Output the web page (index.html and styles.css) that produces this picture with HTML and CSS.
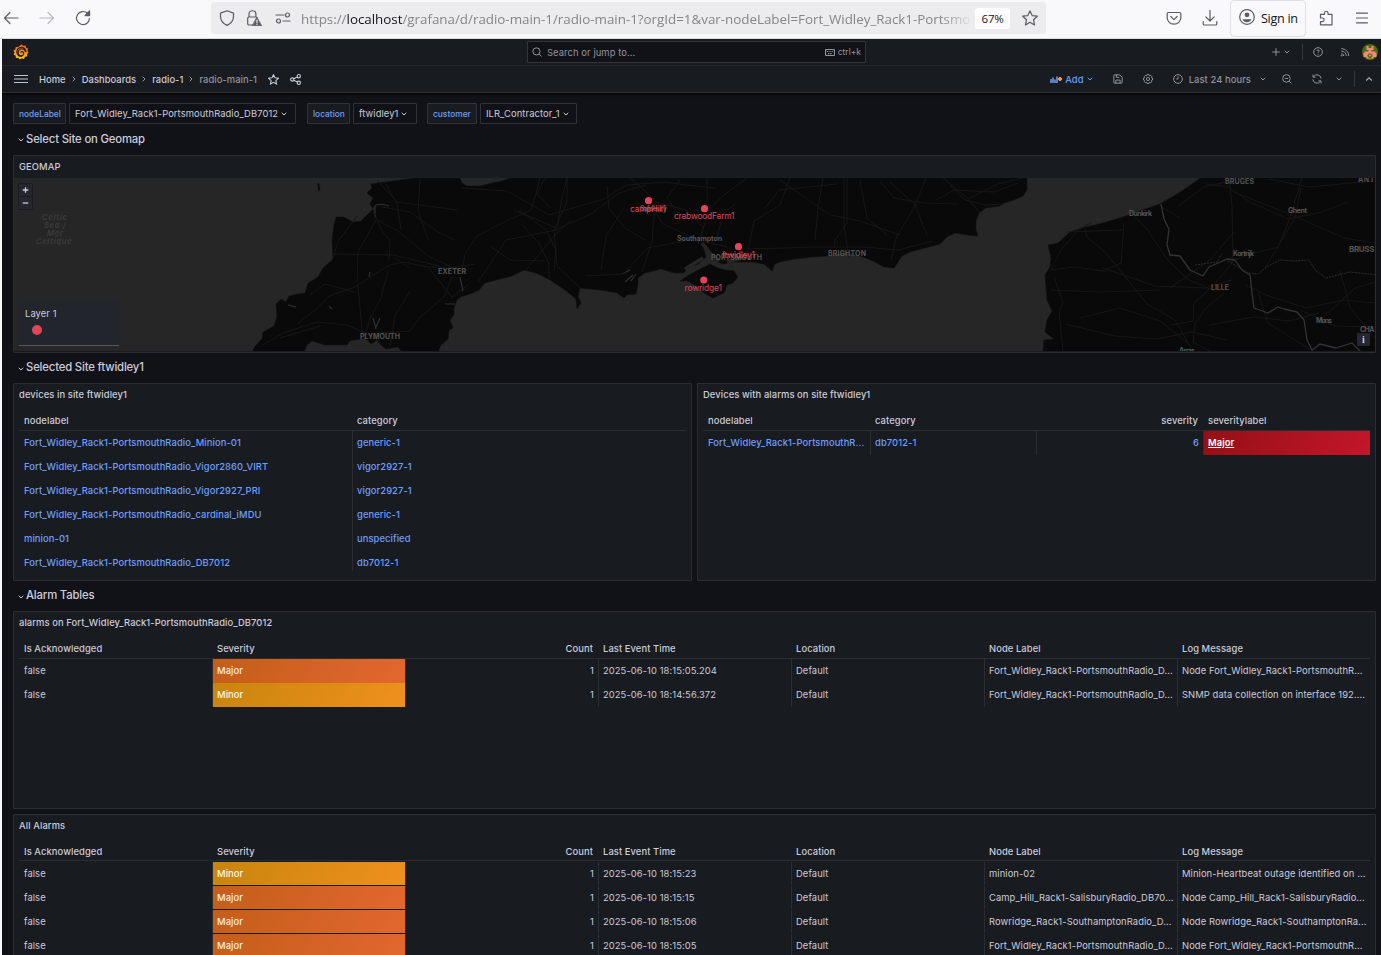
FILE: index.html
```html
<!DOCTYPE html>
<html lang="en">
<head>
<meta charset="utf-8">
<title>radio-main-1 - Dashboards - Grafana</title>
<link rel="stylesheet" href="styles.css">
</head>
<body>
<svg class="defs" width="0" height="0" aria-hidden="true">
  <symbol id="down" viewBox="0 0 8 8"><path d="M2 3l2 2 2-2" fill="none" stroke="currentColor" stroke-width="1" stroke-linecap="round" stroke-linejoin="round"/></symbol>
  <symbol id="right" viewBox="0 0 8 8"><path d="M3 2l2 2-2 2" fill="none" stroke="currentColor" stroke-width="1" stroke-linecap="round" stroke-linejoin="round"/></symbol>
  <linearGradient id="flame" x1="0" y1="0" x2="0" y2="1"><stop offset="0" stop-color="#f05a28"/><stop offset="1" stop-color="#fbca0a"/></linearGradient>
</svg>

<header class="browser">
  <nav class="browser-nav">
    <svg class="i16" viewBox="0 0 16 16"><path d="M15 8H1.500M7 2.500L1.500 8 7 13.500"/></svg>
    <svg class="i16 faded" viewBox="0 0 16 16"><path d="M1 8h13.500M9 2.500L14.500 8 9 13.500"/></svg>
    <svg class="i16" viewBox="0 0 16 16"><path d="M14.500 8.500a6.500 6.500 0 1 1-2-5.200l1.700 1.700"/><path d="M14.600 1v4.600H10z" fill="#5b5b66"/></svg>
  </nav>
  <div class="urlbar">
    <svg class="i16 shield" viewBox="0 0 16 16"><path d="M8 .8l6.500 2.300v3.400c0 4-2.400 7-6.500 8.900C3.900 13.500 1.500 10.500 1.500 6.500V3.100z"/></svg>
    <svg class="i16 lock" viewBox="0 0 16 16"><path d="M6.500 15H3a1.300 1.300 0 0 1-1.300-1.300V8.300A1.300 1.300 0 0 1 3 7h7a1.300 1.300 0 0 1 1.300 1.300M3 7V4.200a3.400 3.400 0 0 1 6.900 0V7"/><path d="M11 7.500l4.600 8.200H6.500z" fill="#5b5b66" stroke="#5b5b66" stroke-width=".8"/><path class="bang" d="M11 10v2.600M11 14v.4"/></svg>
    <svg class="i16 perms" viewBox="0 0 16 16"><path d="M1 5h8M8 11h7"/><circle cx="12.500" cy="5" r="2"/><circle cx="3.500" cy="11" r="2"/></svg>
    <div class="url">https://<b>localhost</b>/grafana/d/radio-main-1/radio-main-1?orgId=1&amp;var-nodeLabel=Fort_Widley_Rack1-Portsmo</div>
    <span class="zoom">67%</span>
    <svg class="i16 bookmark" viewBox="0 0 16 16"><path d="M8 .9l2.200 4.700 5.100.6-3.800 3.500 1 5.200L8 12.300l-4.500 2.600 1-5.200L.7 6.200l5.100-.6z"/></svg>
  </div>
  <div class="browser-tools">
    <svg class="i16 pocket" viewBox="0 0 16 16"><path d="M2.500 2.500h11A1.300 1.300 0 0 1 14.800 3.800v4A6.800 6.400 0 0 1 1.200 7.800v-4A1.300 1.300 0 0 1 2.500 2.500zM4.800 6.500L8 9.600l3.200-3.100"/></svg>
    <svg class="i16 download" viewBox="0 0 16 16"><path d="M8 .5v10M3.800 6.800L8 11l4.200-4.200M1.200 11.500v2.200a1.300 1.300 0 0 0 1.300 1.300h11a1.300 1.300 0 0 0 1.300-1.300v-2.200"/></svg>
    <div class="signin">
      <svg class="i16" viewBox="0 0 16 16"><circle cx="8" cy="8" r="7.300"/><circle cx="8" cy="5.800" r="2.400" fill="#5b5b66" stroke="none"/><path d="M3.500 10.200h9c-.8 2-2.600 3-4.500 3s-3.700-1-4.500-3z" fill="#5b5b66" stroke="none"/></svg>
      <span>Sign in</span>
    </div>
    <svg class="i16 ext" viewBox="0 0 16 16"><path d="M2.500 14.800V11.600h1.800a1.800 1.800 0 0 0 0-3.600H2.500V4.300h4V3a1.700 1.700 0 0 1 3.500 0v1.300h4v10.500z"/></svg>
    <svg class="i16 burger" viewBox="0 0 16 16"><path d="M2.500 3.200h11M2.500 8h11M2.500 12.800h11"/></svg>
  </div>
</header>

<main class="app">
  <div class="topbar">
    <svg class="logo" viewBox="0 0 16 16"><path d="M8.500.3l1.500 1.500 2.500-.3.500 2.100 2 1.200-.5 2 1 1.800-1.400 1.500.2 2.200-2.300.5-1 2.100-2.200-.6-1.900 1.200L5.400 14l-2.500.1-.3-2.400-2-1.300.9-2L.4 6.500l2-1.200.3-2.400 2.500.1z" fill="url(#flame)"/><path d="M13 8.300A4.600 4.600 0 1 0 9.200 12.400M12.400 8A3.600 3.600 0 1 0 8 11.800c1.900 0 3-1.400 2.700-2.800-.4-1.700-2.800-1.900-3-.2" fill="none" stroke="#181b1f" stroke-width="1.100"/></svg>
    <div class="search">
      <svg class="i10" viewBox="0 0 12 12"><circle cx="5.300" cy="5.300" r="4.300"/><path d="M8.500 8.500l2.800 2.800"/></svg>
      <span class="search-text">Search or jump to...</span>
      <svg class="kbd" viewBox="0 0 10 7"><rect x=".5" y=".5" width="9" height="6" rx="1"/><path d="M2 2.500h6M3 4.600h4" stroke-dasharray="1 .7"/></svg>
      <span class="ctrlk">ctrl+k</span>
    </div>
    <div class="top-actions">
      <svg class="i10" viewBox="0 0 12 12"><path d="M6 1.500v9M1.500 6h9"/></svg>
      <svg class="chev c-plus"><use href="#down"/></svg>
      <i class="vline"></i>
      <svg class="i10 help" viewBox="0 0 12 12"><circle cx="6" cy="6" r="5.200"/><path d="M4.600 4.800a1.400 1.400 0 1 1 1.900 1.300c-.4.200-.5.400-.5.900M6 8.300v.9"/></svg>
      <svg class="i10 rss" viewBox="0 0 12 12"><path d="M1.500 2a8.600 8.600 0 0 1 9 8.800M1.500 5a5.700 5.700 0 0 1 6 5.800M1.500 8a3 3 0 0 1 3 2.800"/><circle cx="2" cy="10.300" r=".6"/></svg>
      <svg class="avatar" viewBox="0 0 16 16"><circle cx="8" cy="8" r="8" fill="#4d6b10"/><path d="M4.500 2h2v2h3V2h2v4h-2v1.500h4V9h1v4h-3v1.500h-7V13h-3V9h1V7.500h4V6h-2zM6.500 9.500v1.200H5.500v2h1V14h3v-1.300h1v-2h-1V9.500z" fill="#f58a78" fill-rule="evenodd"/><path d="M7 10.800h2v1.500H7z" fill="#f58a78"/></svg>
    </div>
  </div>

  <div class="toolbar">
    <svg class="menu" viewBox="0 0 14 10"><path d="M0 1.500h14M0 5h14M0 8.500h14"/></svg>
    <nav class="crumbs">
      <span class="cr">Home</span><svg class="chev"><use href="#right"/></svg>
      <span class="cr">Dashboards</span><svg class="chev"><use href="#right"/></svg>
      <span class="cr">radio-1</span><svg class="chev"><use href="#right"/></svg>
      <span class="cr current">radio-main-1</span>
    </nav>
    <svg class="i10 star" viewBox="0 0 12 12"><path d="M6 .8l1.600 3.400 3.700.5-2.700 2.500.7 3.700L6 9.100l-3.300 1.800.7-3.700L.7 4.700l3.700-.5z"/></svg>
    <svg class="i10 share" viewBox="0 0 12 12"><circle cx="2.400" cy="6" r="1.800"/><circle cx="9.600" cy="2.400" r="1.800"/><circle cx="9.600" cy="9.600" r="1.800"/><path d="M4 5.200l4-2M4 6.800l4 2"/></svg>
    <div class="tool-actions">
      <svg class="addicon" viewBox="0 0 12 8"><path d="M1 4v4M3 2.500V8M5 4.500V8M7 1.500V8" stroke="#6e9fff" stroke-width="1.500"/><path d="M10 2v4M8 4h4" stroke="#ff9830" stroke-width="1.900"/></svg>
      <span class="add">Add</span>
      <svg class="chev blue"><use href="#down"/></svg>
      <svg class="i10 save" viewBox="0 0 12 12"><path d="M1 2a1 1 0 0 1 1-1h6l3 3v6a1 1 0 0 1-1 1H2a1 1 0 0 1-1-1zM4 1v3h3.500M3.500 11V7.300h5V11"/></svg>
      <svg class="i10 gear" viewBox="0 0 12 12"><path d="M4.700 .8h2.600l.5 1.200 1.600-.3 1.200 1.200-.4 1.500 1.200.4v2.400l-1.200.5.400 1.500-1.300 1.200-1.500-.4-.5 1.200H4.700l-.5-1.200-1.500.4-1.200-1.200.3-1.500L.7 7.200V4.800l1.200-.4-.3-1.500 1.200-1.200 1.500.3z"/><circle cx="6" cy="6" r="1.900"/></svg>
      <svg class="i10 clock" viewBox="0 0 12 12"><circle cx="6" cy="6" r="5.200"/><path d="M6 3v3H4"/></svg>
      <span class="range">Last 24 hours</span>
      <svg class="chev c-range"><use href="#down"/></svg>
      <svg class="i10 zoomout" viewBox="0 0 12 12"><circle cx="5.300" cy="5.300" r="4.500"/><path d="M8.500 8.500l2.800 2.800M3.300 5.300h4"/></svg>
      <svg class="i10 sync" viewBox="0 0 12 12"><path d="M11 5.500A5 5 0 0 0 2 3M1.200 .8v3H4.200M1 6.500A5 5 0 0 0 10 9M10.800 11.200v-3H7.800"/></svg>
      <svg class="chev c-sync"><use href="#down"/></svg>
      <i class="vline v2"></i>
      <svg class="chev collapse" viewBox="0 0 8 8"><path d="M1.200 5.500L4 2.800l2.800 2.700" fill="none" stroke="#a9aab6" stroke-width="1.200"/></svg>
    </div>
  </div>

  <div class="dashboard">
    <div class="vars">
      <span class="var-label nl">nodeLabel</span><span class="var-value nv"><span>Fort_Widley_Rack1-PortsmouthRadio_DB7012</span><svg class="chev"><use href="#down"/></svg></span>
      <span class="var-label ll">location</span><span class="var-value lv"><span>ftwidley1</span><svg class="chev"><use href="#down"/></svg></span>
      <span class="var-label cl">customer</span><span class="var-value cv"><span>ILR_Contractor_1</span><svg class="chev"><use href="#down"/></svg></span>
    </div>

    <h2 class="row-title"><svg class="chev"><use href="#down"/></svg><span>Select Site on Geomap</span></h2>

    <section class="panel geomap">
      <h3><span>GEOMAP</span></h3>
      <div class="map">
        <svg class="map-art" viewBox="14 178 1361 173">
          <g class="land">
            <path d="M252 352L256 345 262 339 263 332 274 326 277 317 276 304 281 299 286 302 289 296 298 294 305 293 308 283 318 277 323 268 333 259 332 240 334 225 336 217 344 217 353 222 361 221 368 214 373 209 370 204 373 198 367 193 372 188 371 184 385 182 400 180 415 178 460 178 462 183 467 186 480 186 492 183 502 181 514 177H1027V190L1023 196 1014 200 1004 203 1000 206 986 208 979 213 976 221 976 230 978 236 967 235 955 233 947 237 940 244 925 248 910 252 902 256 894 268 884 267 873 261 860 256 845 252 827 256 812 257 795 259 780 262 775 264 772 271 764 264 752 262 735 262 722 264 714 259 703 247 706 257 698 264 688 267 684 273 674 273 661 269 645 273 638 278 638 285 636 294 627 295 624 298 617 293 600 290 580 288 578 296 581 303 577 309 576 299 565 290 550 280 536 273 524 270 512 276 500 279 485 283 479 290 470 294 461 297 457 300 454 308 454 315 450 320 453 328 449 330 448 339 441 345 438 352H402L398 347 386 349 382 346 377 340 371 344 365 338 350 341 347 345 325 345 312 341 307 345 304 352z"/>
            <path d="M680 281L689 275 702 268 710 264 718 268 726 270 734 271 738 277 733 283 727 285 724 293 713 298 704 293 696 286 688 281z"/>
            <path d="M1202 177L1182 191 1160 204 1145 209 1120 218 1095 225 1085 227 1070 232 1058 243 1048 245 1051 258 1050 267 1045 275 1047 300 1052 311 1047 320 1045 332 1054 339 1044 340 1043 352H1376V177z"/>
            <path d="M318 183l1 1 1 5-1 2-1-3z"/>
          </g>
          <g class="inlet">
            <path d="M373 210l3-5 6-1 7 2M375 206v12M288 305l8 2M373 318l3 11M376 327l4-9M329 306l3 3M370 272l-1 5M460 277l3 14M445 304h10M622 274l8-4M625 282l8-7M631 281l5-7"/>
            <path class="wide" d="M702 243l8 10 9 8M703 258l-18 11M727 262l18-5"/>
          </g>
          <g class="roads">
            <path d="M263 345l20-12 34-11 30 3 30 14M297 324l18-14 14-14 26-9 23-15 12-7 13-3 25 5 27 0 20-3M373 211l8 18 9 12-1 20M382 207l28 5 28 20 17 8M358 285l4 45 13 10M388 271l-8 30-10 17-6 21M331 262l8-22 18-24M334 254l60 1 45 11M357 282l1-30 18-32M410 268l-15-10M428 267l24 30 16-12M452 277l-8 20-24 20-10 14-18 1-16 1M377 220l21 11 30 25 34 16M390 346l5-30 15-25M280 338l40-12M310 295l15-11 15 4 14 4M377 180l20 22 60 8M385 182l12 22 4 25M420 180l-2 30 10 30"/>
            <path d="M461 274l4-20 12-18 29-15 25-11 6-20 3-14M519 210l27 20 10 20-2 21M514 210l43 18 5-30 5-20M567 178v24l-13 28 3 36 23 22M462 188l45 3 42 24 55-16 22-14 40-3 20 3 30 3M630 178l12 10 14 14 30 8 18 18M655 205l-3 37-10 30M555 230l36-16 28-21 27-8M585 276l38-2 25-26 42-8M521 224l18 19 10 21 0 14M607 186l2 22 16 20 20 12M698 244l9-27 0-39M706 213l18-18 23-17M650 204l13 20 22 10 15 7 27 6M717 238l6-24 12-10M748 252l6-31 26-16 10-27M750 249l65-2 48 0 35 3 34-9M847 178v45l-12 17-1 8M844 178v47l5 33M823 178l-5 30-3 32M765 208l14-18 58-6M780 180l50 35 30 6 40 14M860 180l7 38 20 17M926 178l-12 30-18 30-5 22M890 182l25 23 12 30"/>
            <path d="M943 178l25 21 14 16M968 199l30-15 24-6M936 200l18-10 40 2 24-9M950 185l15 15 20 5 19-1M880 181l14 17 30 5 35 1M478 282l28-42 50-10M525 271l30-36 16-15M490 246l20 14 35 1M601 270l5-34 18-28M545 178l-8 16 14 14M680 180l-13 18 15 20"/>
            <path d="M1051 270l10-20 17-20 14-8M1066 232l56-2M1085 229l2 8 18 15 18 22 24 30 28 16 15 26 4 5M1050 270l25-3 28 4 18-8 3-40M1054 277l9 26-4 8 4 40M1135 217l12 12 20 30 20 20 28 12M1160 206l20 12M1178 206l26-19 22-5M1206 184l22 3 22 15 38 17 34-7 26-10M1229 178l3 28 1 55 14-6 31-8 12-29 12-40M1234 192l60 24 50 22 31 5M1236 258l-22 27-20 18-1 18-22 4M1224 293l-18 15-11 16-2 18 17 9M1246 285l20 10 40 13 38-8 31 3M1209 325l45-8 35 4 30-8M1232 280l-27 8-50-2-52-18M1050 290l50 2 60-2M1065 324l50 12 42 3 35-7 35 8M1080 318l40-10 40 13 30 24M1170 288l40-28 24-28M1301 188l-6 30-12 20-18 30M1269 179l40 8 66-6M1258 293l10 30 25 16 20 12M1320 320l35-32 20-6M1340 270l10 38 25 30M1300 310l35 16 40 1"/>
          </g>
          <g class="border">
            <path d="M1161 204l3 15 5 10-2 16 3 10 10 1 10 14 13 6 6-9 18-8 8 1 7 10 8 5 2 18 2 15 14 5 10-6 6 2 13 3 7 8 3 20 5 10 8-6 16 4 16-5 12 12"/>
            <path class="dots" d="M1195 265l22-3 5-8M1228 261l20 12 10 1 10-8 12-6 14 1 15-1 7 11 10 7 24-6 30 3"/>
          </g>
          <g class="places">
            <g class="sea"><text x="42" y="220">Celtic</text><text x="44" y="228">Sea /</text><text x="47" y="236">Mer</text><text x="36" y="244">Celtique</text></g>
            <text x="438" y="273.500" textLength="28">EXETER</text><text x="360" y="339" textLength="40">PLYMOUTH</text>
            <text x="677" y="241" textLength="45">Southampton</text><text x="711" y="260" textLength="51">PORTSMOUTH</text>
            <text x="828" y="256" textLength="38">BRIGHTON</text><text x="640" y="211" textLength="27">Salisbury</text>
            <text x="1129" y="216" textLength="23">Dunkirk</text><text x="1225" y="184" textLength="29">BRUGES</text>
            <text x="1288" y="213" textLength="19">Ghent</text><text x="1233" y="256" textLength="21">Kortrijk</text>
            <text x="1211" y="290" textLength="18">LILLE</text><text x="1349" y="252" textLength="25.500" class="big">BRUSS</text>
            <text x="1316" y="323" textLength="16">Mons</text><text x="1360" y="332" textLength="14.500">CHA</text>
            <text x="1179" y="353" textLength="16">Arras</text><text x="1358" y="182" textLength="16.500">ANT</text>
          </g>
          <g class="markers">
            <circle cx="648.500" cy="200.700" r="3.600"/><text x="630" y="211.600" textLength="36">campHill1</text>
            <circle cx="704.500" cy="208.700" r="3.600"/><text x="674" y="219" textLength="60.500">crabwoodFarm1</text>
            <circle cx="738.500" cy="246.700" r="3.600"/><text x="722" y="257.600" textLength="33">ftwidley1</text>
            <circle cx="703.800" cy="280" r="3.600"/><text x="684.500" y="290.500" textLength="37.500">rowridge1</text>
          </g>
        </svg>
        <div class="map-zoom"><svg viewBox="0 0 13 13"><path d="M3.500 6.500h6M6.500 3.500v6"/></svg><svg viewBox="0 0 13 13"><path d="M3.500 6.500h6"/></svg></div>
        <div class="legend"><span>Layer 1</span><i></i></div>
        <div class="attrib">i</div>
      </div>
    </section>

    <h2 class="row-title second"><svg class="chev"><use href="#down"/></svg><span>Selected Site ftwidley1</span></h2>

    <div class="split">
      <section class="panel">
        <h3><span>devices in site ftwidley1</span></h3>
        <div class="table two">
          <div class="tr th"><span>nodelabel</span><span>category</span></div>
          <div class="tr link"><span>Fort_Widley_Rack1-PortsmouthRadio_Minion-01</span><span>generic-1</span></div>
          <div class="tr link"><span>Fort_Widley_Rack1-PortsmouthRadio_Vigor2860_VIRT</span><span>vigor2927-1</span></div>
          <div class="tr link"><span>Fort_Widley_Rack1-PortsmouthRadio_Vigor2927_PRI</span><span>vigor2927-1</span></div>
          <div class="tr link"><span>Fort_Widley_Rack1-PortsmouthRadio_cardinal_iMDU</span><span>generic-1</span></div>
          <div class="tr link"><span>minion-01</span><span>unspecified</span></div>
          <div class="tr link"><span>Fort_Widley_Rack1-PortsmouthRadio_DB7012</span><span>db7012-1</span></div>
        </div>
      </section>
      <section class="panel">
        <h3><span>Devices with alarms on site ftwidley1</span></h3>
        <div class="table four">
          <div class="tr th"><span>nodelabel</span><span>category</span><span class="num">severity</span><span>severitylabel</span></div>
          <div class="tr link"><span>Fort_Widley_Rack1-PortsmouthR...</span><span>db7012-1</span><span class="num">6</span><span class="critical">Major</span></div>
        </div>
      </section>
    </div>

    <h2 class="row-title third"><svg class="chev"><use href="#down"/></svg><span>Alarm Tables</span></h2>

    <section class="panel alarms">
      <h3><span>alarms on Fort_Widley_Rack1-PortsmouthRadio_DB7012</span></h3>
      <div class="table seven">
        <div class="tr th"><span>Is Acknowledged</span><span>Severity</span><span class="num">Count</span><span>Last Event Time</span><span>Location</span><span>Node Label</span><span>Log Message</span></div>
        <div class="tr"><span>false</span><span class="major">Major</span><span class="num">1</span><span>2025-06-10 18:15:05.204</span><span>Default</span><span>Fort_Widley_Rack1-PortsmouthRadio_D...</span><span>Node Fort_Widley_Rack1-PortsmouthR...</span></div>
        <div class="tr"><span>false</span><span class="minor">Minor</span><span class="num">1</span><span>2025-06-10 18:14:56.372</span><span>Default</span><span>Fort_Widley_Rack1-PortsmouthRadio_D...</span><span>SNMP data collection on interface 192....</span></div>
      </div>
    </section>

    <section class="panel all">
      <h3><span>All Alarms</span></h3>
      <div class="table seven gapped">
        <div class="tr th"><span>Is Acknowledged</span><span>Severity</span><span class="num">Count</span><span>Last Event Time</span><span>Location</span><span>Node Label</span><span>Log Message</span></div>
        <div class="tr"><span>false</span><span class="minor">Minor</span><span class="num">1</span><span>2025-06-10 18:15:23</span><span>Default</span><span>minion-02</span><span>Minion-Heartbeat outage identified on ...</span></div>
        <div class="tr"><span>false</span><span class="major">Major</span><span class="num">1</span><span>2025-06-10 18:15:15</span><span>Default</span><span>Camp_Hill_Rack1-SalisburyRadio_DB70...</span><span>Node Camp_Hill_Rack1-SalisburyRadio...</span></div>
        <div class="tr"><span>false</span><span class="major">Major</span><span class="num">1</span><span>2025-06-10 18:15:06</span><span>Default</span><span>Rowridge_Rack1-SouthamptonRadio_D...</span><span>Node Rowridge_Rack1-SouthamptonRa...</span></div>
        <div class="tr"><span>false</span><span class="major">Major</span><span class="num">1</span><span>2025-06-10 18:15:05</span><span>Default</span><span>Fort_Widley_Rack1-PortsmouthRadio_D...</span><span>Node Fort_Widley_Rack1-PortsmouthR...</span></div>
      </div>
    </section>
  </div>
</main>
</body>
</html>
```
FILE: styles.css
```css
* { box-sizing: border-box; }
body { margin: 0; width: 1381px; height: 955px; overflow: hidden; background: #f9f9fb; font-family: Inter, "Liberation Sans", sans-serif; font-size: 9.4px; letter-spacing: .085px; color: #ccccdc; }
.defs { position: absolute; }
svg { display: block; flex: none; }
h2, h3 { margin: 0; font-weight: 500; }

/* Browser chrome */
.browser { height: 39px; display: flex; align-items: flex-start; border-bottom: 1px solid #d9dcdf; font-family: "Open Sans", "Noto Sans", sans-serif; letter-spacing: 0; }
.browser svg { fill: none; stroke: #5b5b66; stroke-width: 1.2; stroke-linejoin: round; stroke-linecap: round; }
.browser .bang { stroke: #ececee; }
.i16 { width: 16px; height: 16px; }
.browser-nav { display: flex; gap: 20px; width: 211px; padding: 10px 0 0 3px; }
.browser-nav .faded { opacity: .4; }
.urlbar { width: 835px; height: 32px; margin-top: 2px; border-radius: 4px; background: #ececee; display: flex; align-items: center; padding-left: 8px; }
.lock { margin-left: 11px; }
.perms { margin-left: 13px; }
.url { width: 668px; margin-left: 10px; overflow: hidden; white-space: nowrap; font-size: 13.400px; letter-spacing: -.02px; line-height: 20px; padding-top: 2px; color: #858588; -webkit-mask-image: linear-gradient(to right, #000 640px, transparent 672px); mask-image: linear-gradient(to right, #000 640px, transparent 672px); }
.url b { font-weight: 400; color: #15141a; }
.zoom { margin-left: 6px; width: 35px; height: 21px; border-radius: 3px; background: #fff; color: #15141a; font-size: 11.500px; line-height: 21px; text-align: center; letter-spacing: -.3px; }
.bookmark { margin-left: 12px; }
.browser-tools { display: flex; align-items: flex-start; }
.pocket { margin: 10px 0 0 120px; }
.download { margin: 10px 0 0 20px; }
.signin { display: flex; gap: 6px; width: 76px; height: 37px; margin-left: 12px; padding: 8px 0 0 8px; border: 1px solid #e0e0e4; border-radius: 4px; color: #15141a; font-size: 12.600px; line-height: 20px; letter-spacing: -.3px; white-space: nowrap; }
.ext { margin: 10px 0 0 12px; }
.burger { margin: 10px 0 0 20px; }

/* Grafana chrome */
.app { margin-left: 2px; height: 916px; overflow: hidden; background: #111217; }
.topbar, .toolbar { height: 27px; display: flex; align-items: center; background: #181b1f; border-bottom: 1px solid #2d3035; }
.app svg { fill: none; stroke: currentColor; stroke-width: 1.200; }
.app .logo { width: 16px; height: 16px; stroke: none; margin-left: 11px; }
.i10 { width: 10px; height: 10px; }
.chev { width: 8px; height: 8px; }
.search { width: 339px; height: 22px; margin-left: 498px; padding: 0 4px; display: flex; align-items: center; border: 1px solid #35363b; border-radius: 1px; background: #111217; color: #92939d; }
.search-text { margin-left: 5px; }
.kbd { width: 10px; height: 7px; margin-left: auto; }
.ctrlk { margin-left: 3px; font-size: 8.500px; letter-spacing: 0; }
.top-actions, .tool-actions { margin-left: auto; display: flex; align-items: center; color: #92939d; }
.c-plus { margin-left: 2px; }
.vline { width: 1px; height: 16px; background: #34363c; margin-left: 11px; }
.help { margin-left: 10px; }
.rss { margin-left: 17px; }
.app .avatar { width: 16px; height: 16px; margin: 0 3px 0 12px; stroke: none; }
.toolbar { box-shadow: 0 1px 3px #000; position: relative; }
.app .menu { width: 14px; height: 10px; margin-left: 12px; stroke: #c4c4d2; }
.crumbs { display: flex; align-items: center; margin-left: 11px; font-weight: 500; letter-spacing: .05px; }
.crumbs .chev { margin: 0 4px; color: #92939d; }
.current { color: #92939d; }
.star { width: 11px; height: 11px; margin-left: 11px; }
.share { width: 11px; height: 11px; margin-left: 11px; }
.addicon { width: 12px; height: 8px; }
.add { color: #6e9fff; font-weight: 500; margin-left: 3px; }
.blue { color: #6e9fff; margin-left: 2px; }
.save { margin-left: 19px; }
.gear { margin-left: 20px; }
.clock { margin-left: 20px; }
.range { font-weight: 500; margin-left: 6px; }
.c-range { margin-left: 8px; }
.zoomout { margin-left: 15px; }
.sync { margin-left: 20px; }
.c-sync { margin-left: 13px; }
.collapse { margin: 0 8px 0 10px; }

/* Dashboard */
.dashboard { padding: 10px 5px 0 11px; }
.vars { display: flex; height: 21px; }
.var-label, .var-value { height: 21px; display: flex; align-items: center; border: 1px solid #303238; border-radius: 1px; white-space: nowrap; padding-left: 5px; }
.var-label { background: #181b1f; color: #6e9fff; font-size: 8.400px; font-weight: 500; letter-spacing: 0; }
.var-value { margin-left: 3px; }
.var-value .chev { margin-left: 2px; }
.nl { width: 53px; } .nv { width: 227px; } .ll { width: 43px; margin-left: 11px; } .lv { width: 64px; } .cl { width: 50px; margin-left: 10px; } .cv { width: 97px; }
.row-title { display: flex; align-items: center; height: 31px; padding: 0 0 2px 4px; font-size: 11.300px; letter-spacing: -.16px; gap: 1px; }
.row-title .chev { margin-top: 3px; }
.panel { height: 198px; border: 1px solid #2b2d33; border-radius: 1px; background: #181b1f; overflow: hidden; }
h3 { height: 22px; padding-left: 5px; line-height: 22px; font-size: 9.400px; }
.map { position: relative; height: 173px; background: #262626; overflow: hidden; }
.map-art { width: 1361px; height: 173px; }
.app .land { fill: #090909; stroke: #111; stroke-width: .6; }
.inlet { stroke: #303030; stroke-width: 1.200; }
.inlet .wide { stroke: #262626; stroke-width: 3.500; }
.roads { stroke: #191919; stroke-width: .9; stroke-linejoin: round; }
.border { stroke: #343434; stroke-width: 1.300; stroke-linejoin: round; }
.border .dots { stroke: #2c2c2c; stroke-width: 1; stroke-dasharray: 2 1; }
.places { fill: #545454; stroke: none; font-size: 7px; font-weight: 700; letter-spacing: 0; }
.places .big { font-size: 8px; }
.sea { fill: #3a3a3a; font-style: italic; letter-spacing: .7px; font-size: 7.500px; }
.app .markers { fill: #e0455a; stroke: none; font-size: 8.400px; letter-spacing: 0; }
.map-zoom { position: absolute; left: 4px; top: 5px; width: 15px; display: grid; gap: 1px; padding: 1px; border-radius: 1px; background: #1b1c22; }
.app .map-zoom svg { width: 13px; height: 12px; background: #26272e; stroke: #ccccdc; stroke-width: 1.400; }
.legend { position: absolute; left: 5px; top: 124px; width: 100px; height: 44px; padding: 6px; background: #22252b; border-bottom: 1px solid #55575f; line-height: 12px; }
.legend i { display: block; width: 10px; height: 10px; margin: 5px 0 0 7px; border-radius: 50%; background: #e0455a; }
.attrib { position: absolute; right: 5px; top: 155px; width: 13px; height: 13px; border-radius: 1px; background: #26272e; font: bold 10px/13px "Liberation Serif", serif; text-align: center; }
.second, .third { height: 30px; }
.split { display: grid; grid-template-columns: 679px 679px; gap: 5px; }
.all { margin-top: 5px; }

/* Tables */
.table { padding: 0 5px; }
.tr { display: grid; height: 24px; }
.two { height: 165px; overflow: hidden; }
.two .tr { grid-template-columns: 334px 333px; }
.four .tr { grid-template-columns: 168px 166px 167px 166px; }
.seven .tr { grid-template-columns: 194px repeat(6, 193px); width: 1351px; }
.tr span { padding: 0 3px 0 4px; line-height: 24px; border-right: 1px solid #2b2d33; overflow: hidden; white-space: nowrap; }
.tr span:first-child { padding-left: 5px; }
.tr span:last-child { border-right: 0; }
.tr .num { text-align: right; padding-right: 4px; }
.tr.th { height: 25px; border-bottom: 1px solid #2b2d33; font-weight: 500; }
.tr.th span { border-color: transparent; line-height: 30px; }
.tr.th .num { padding-right: 5px; }
.link { color: #6e9fff; font-weight: 500; }
.tr .critical { background: linear-gradient(120deg, #941015, #c4162a); color: #fff; text-decoration: underline; font-weight: 600; }
.tr .major { background: linear-gradient(120deg, #c45e18, #e26730); color: #fbefe8; font-weight: 500; }
.tr .minor { background: linear-gradient(120deg, #c8850e, #f0901d); color: #fff6e5; font-weight: 500; }
.gapped .th { height: 24px; margin-bottom: 1px; }
.gapped .tr:not(.th) { border-bottom: 1px solid #181b1f; }
```
